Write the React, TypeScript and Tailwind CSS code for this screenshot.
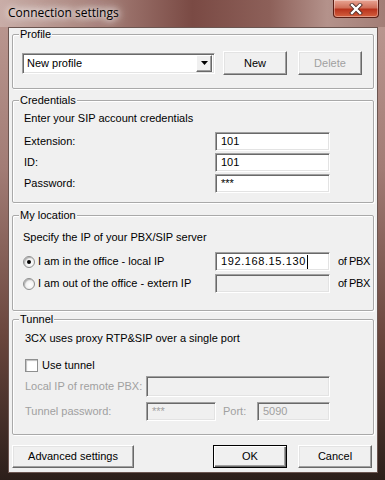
import React from "react";

const font = "font-['Liberation_Sans',Arial,sans-serif] text-[11px] leading-[13px]";

function Group({ title, className, children }: { title: string; className?: string; children?: React.ReactNode }) {
  return (
    <div className={"relative border border-[#a9a9a9] rounded-[2px] shadow-[inset_1px_1px_0_#ffffff,1px_1px_0_#ffffff] " + (className ?? "")}>
      <span className="absolute -top-[7px] left-[6px] bg-[#f0f0f0] px-[1px] text-black">{title}</span>
      {children}
    </div>
  );
}

function Field({ value, className, disabled, ip }: { value?: string; className?: string; disabled?: boolean; ip?: boolean }) {
  return (
    <div
      className={
        "flex items-center border border-[#a0a0a0] border-b-white border-r-white shadow-[inset_1px_1px_0_#696969,inset_-1px_-1px_0_#e3e3e3] pl-[5px] " +
        (disabled ? "bg-[#f0f0f0] text-[#a0a0a0] " : "bg-white text-black ") +
        (className ?? "")
      }
    >
      {ip ? (
        <span className="flex items-center tracking-[0.6px]">
          {value}
          <span className="ml-[1px] inline-block w-[1px] h-[14px] bg-black" />
        </span>
      ) : (
        <span>{value}</span>
      )}
    </div>
  );
}

function Button({ label, className, disabled, isDefault }: { label: string; className?: string; disabled?: boolean; isDefault?: boolean }) {
  return (
    <div
      className={
        "flex items-center justify-center bg-[#f0f0f0] " +
        (isDefault
          ? "border border-black shadow-[inset_1px_1px_0_#ffffff,inset_-1px_-1px_0_#696969,inset_-2px_-2px_0_#a0a0a0] "
          : "border border-white border-r-[#696969] border-b-[#696969] shadow-[inset_-1px_-1px_0_#a0a0a0,inset_1px_1px_0_#e3e3e3] ") +
        (disabled ? "text-[#a0a0a0] " : "text-black ") +
        (className ?? "")
      }
    >
      {label}
    </div>
  );
}

function Radio({ checked }: { checked?: boolean }) {
  return (
    <div className="w-[12px] h-[12px] rounded-full border border-[#8e8f8f] bg-[radial-gradient(circle_at_60%_60%,#ffffff,#e3e3e3)] flex items-center justify-center shadow-[inset_1px_1px_1px_#b0b0b0]">
      {checked && <div className="w-[4px] h-[4px] rounded-full bg-black" />}
    </div>
  );
}

export default function App() {
  return (
    <div className="w-[385px] h-[480px] overflow-hidden flex flex-col bg-[linear-gradient(180deg,#bd9a93_0%,#a27c75_35%,#6a463d_70%,#2c1f1a_100%)] relative">
      {/* title bar */}
      <div className="h-[27px] flex items-start bg-[linear-gradient(90deg,#c9ada7_0%,#a8827b_25%,#7a4a44_50%,#8d6059_70%,#b4928b_85%,#a27d76_100%)]">
        <div className="mt-[5px] ml-[8px] font-['Open_Sans','Segoe_UI',sans-serif] text-[12px] leading-[16px] text-black [text-shadow:0_0_6px_#ffffff,0_0_10px_#ffffff,0_0_14px_#ffffff]">
          Connection settings
        </div>
        <div className="ml-auto mr-[6px] w-[46px] h-[18px] rounded-b-[4px] border border-[#5a1e14] border-t-0 bg-[linear-gradient(180deg,#e9a594_0%,#d0705a_45%,#b8331c_55%,#d4603f_100%)] shadow-[inset_0_0_0_1px_rgba(255,255,255,0.35)] flex items-center justify-center">
          <svg width="14" height="12" viewBox="0 0 14 12">
            <path d="M3 2 L11 10 M11 2 L3 10" stroke="#4a2a25" strokeWidth="4" strokeLinecap="square" />
            <path d="M3 2 L11 10 M11 2 L3 10" stroke="#ffffff" strokeWidth="2.4" strokeLinecap="square" />
          </svg>
        </div>
      </div>
      {/* client */}
      <div className={"ml-[8px] mr-[7px] h-[446px] bg-[#f0f0f0] border border-[#6b5550] px-[3px] pt-[6px] flex flex-col " + font}>
        <Group title="Profile" className="h-[55px] pl-[9px] pt-[16px]">
          <div className="flex items-center">
            <div className="w-[193px] h-[21px] flex items-center border border-[#a0a0a0] border-b-white border-r-white shadow-[inset_1px_1px_0_#696969,inset_-1px_-1px_0_#e3e3e3] bg-white pl-[4px] pr-[2px]">
              <span className="flex-1">New profile</span>
              <div className="w-[16px] h-[17px] bg-[#f0f0f0] border border-white border-r-[#696969] border-b-[#696969] shadow-[inset_-1px_-1px_0_#a0a0a0] flex items-center justify-center">
                <svg width="7" height="4" viewBox="0 0 7 4"><path d="M0 0 H7 L3.5 4 Z" fill="#000" /></svg>
              </div>
            </div>
            <Button label="New" className="ml-[8px] w-[64px] h-[24px]" />
            <Button label="Delete" disabled className="ml-[11px] w-[64px] h-[24px]" />
          </div>
        </Group>

        <Group title="Credentials" className="mt-[11px] h-[103px] pl-[11px] pr-[43px] pt-[11px]">
          <div className="h-[13px]">Enter your SIP account credentials</div>
          <div className="mt-[7px] flex flex-col gap-[2px]">
            <div className="flex items-center">
              <span className="flex-1">Extension:</span>
              <Field value="101" className="w-[115px] h-[19px]" />
            </div>
            <div className="flex items-center">
              <span className="flex-1">ID:</span>
              <Field value="101" className="w-[115px] h-[19px]" />
            </div>
            <div className="flex items-center">
              <span className="flex-1">Password:</span>
              <Field value="***" className="w-[115px] h-[19px]" />
            </div>
          </div>
        </Group>

        <Group title="My location" className="mt-[12px] h-[96px] pl-[10px] pr-0 pt-[15px]">
          <div className="h-[13px]">Specify the IP of your PBX/SIP server</div>
          <div className="mt-[8px] flex flex-col gap-[3px]">
            <div className="flex items-center h-[19px]">
              <Radio checked />
              <span className="ml-[3px] flex-1">I am in the office - local IP</span>
              <Field value="192.168.15.130" ip className="w-[115px] h-[19px]" />
              <span className="ml-[8px] w-[35px] tracking-[-0.4px]">of PBX</span>
            </div>
            <div className="flex items-center h-[19px]">
              <Radio />
              <span className="ml-[3px] flex-1">I am out of the office - extern IP</span>
              <Field disabled className="w-[115px] h-[19px]" />
              <span className="ml-[8px] w-[35px] tracking-[-0.4px]">of PBX</span>
            </div>
          </div>
        </Group>

        <Group title="Tunnel" className="mt-[8px] h-[116px] pl-[12px] pr-[43px] pt-[12px]">
          <div className="h-[13px]">3CX uses proxy RTP&amp;SIP over a single port</div>
          <div className="mt-[14px] flex items-center h-[13px]">
            <div className="w-[13px] h-[13px] bg-white border border-[#8e8f8f] shadow-[inset_1px_1px_1px_#c0c0c0]" />
            <span className="ml-[4px]">Use tunnel</span>
          </div>
          <div className="mt-[4px] flex items-center text-[#a0a0a0]">
            <span className="flex-1">Local IP of remote PBX:</span>
            <Field disabled className="w-[184px] h-[21px]" />
          </div>
          <div className="mt-[5px] flex items-center text-[#a0a0a0]">
            <span className="flex-1">Tunnel password:</span>
            <Field value="***" disabled className="w-[70px] h-[19px]" />
            <span className="ml-[7px] w-[34px]">Port:</span>
            <Field value="5090" disabled className="w-[73px] h-[19px]" />
          </div>
        </Group>

        <div className="mt-[10px] flex items-center">
          <Button label="Advanced settings" className="w-[122px] h-[23px]" />
          <Button label="OK" isDefault className="ml-auto w-[74px] h-[23px]" />
          <Button label="Cancel" className="ml-[11px] mr-[2px] w-[74px] h-[23px]" />
        </div>
      </div>
    </div>
  );
}
